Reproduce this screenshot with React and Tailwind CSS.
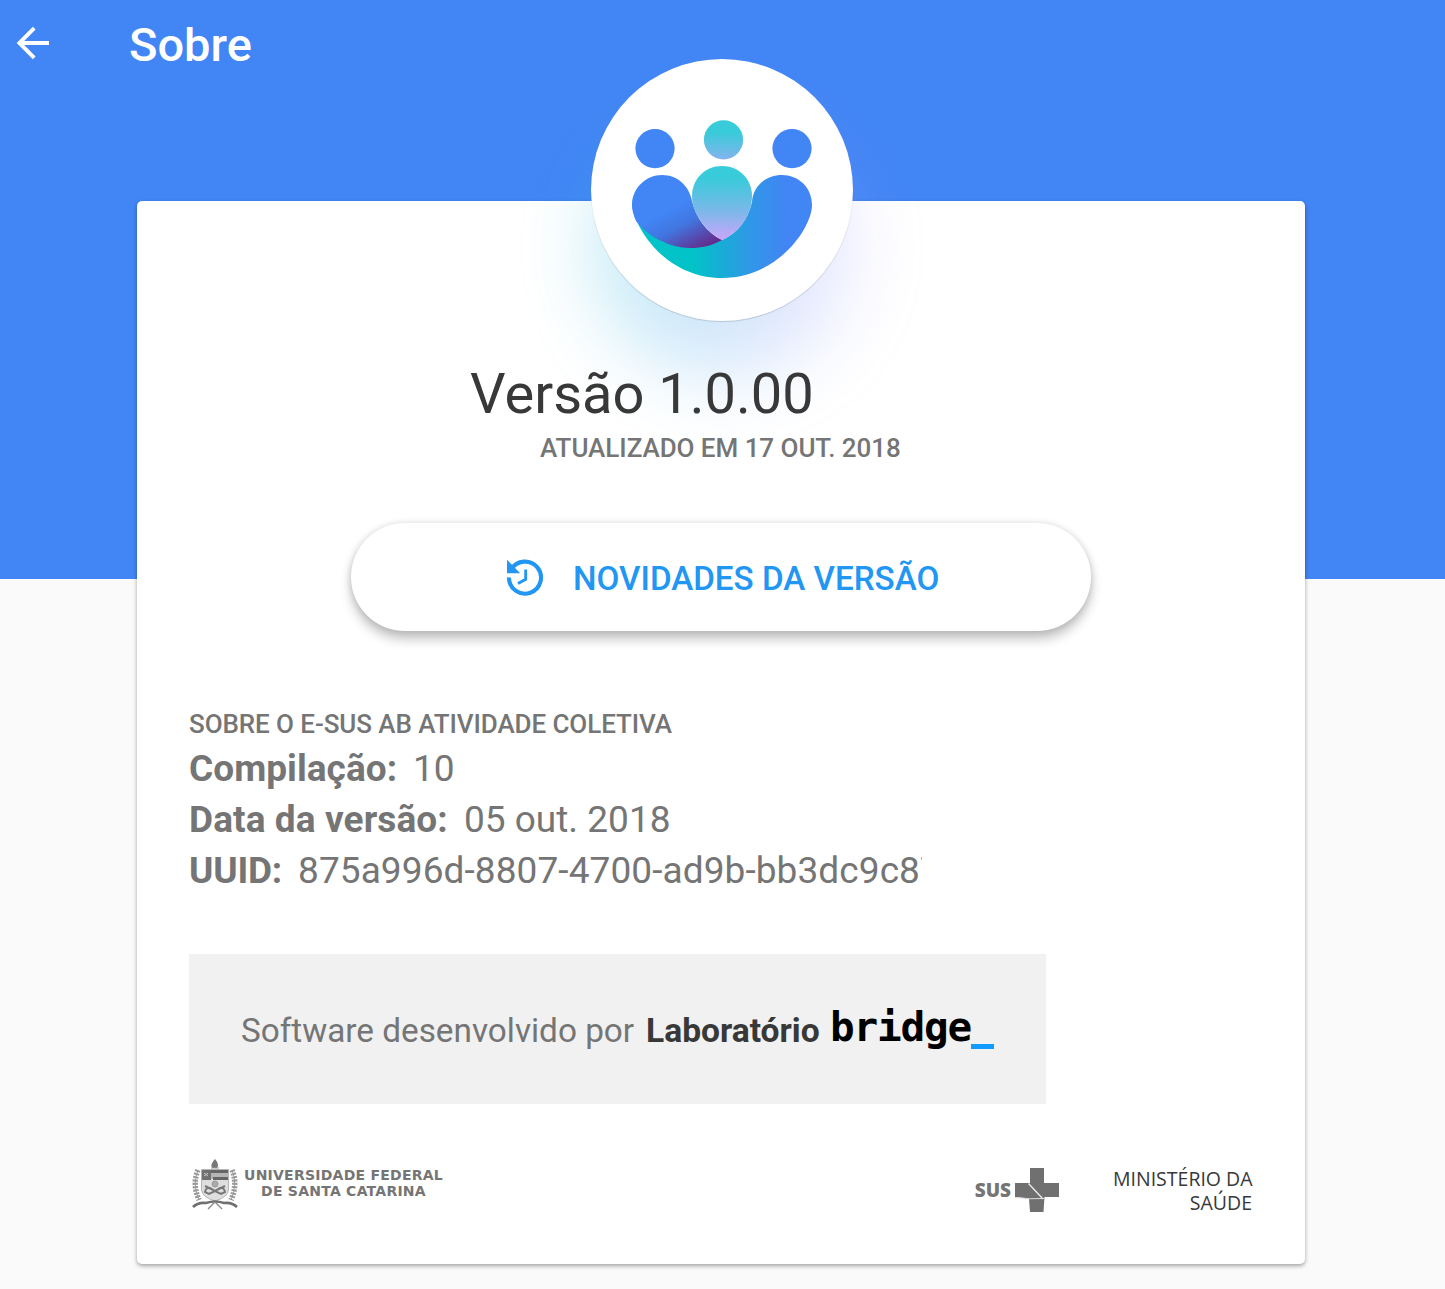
import React from "react";

function BackArrow() {
  return (
    <svg className="block h-[34px] w-[34px]" viewBox="0 0 34 34" fill="none" stroke="#fff" strokeWidth="3.9">
      <path d="M33 17H4M18.2 2.2L3.4 17L18.2 31.8" />
    </svg>
  );
}

function AppLogo() {
  return (
    <svg className="block h-[262px] w-[262px]" viewBox="0 0 262 262">
      <defs>
        <linearGradient id="smile" x1="40" y1="0" x2="222" y2="0" gradientUnits="userSpaceOnUse">
          <stop offset="0.34" stopColor="#01c3c8" />
          <stop offset="0.55" stopColor="#20a5da" />
          <stop offset="0.65" stopColor="#2f98e7" />
          <stop offset="0.85" stopColor="#4285f4" />
        </linearGradient>
        <linearGradient id="heart" x1="71" y1="132" x2="104" y2="196" gradientUnits="userSpaceOnUse">
          <stop offset="0.28" stopColor="#4285f4" />
          <stop offset="0.55" stopColor="#4176e0" />
          <stop offset="1" stopColor="#672686" />
        </linearGradient>
        <linearGradient id="drop" x1="0" y1="108" x2="0" y2="181" gradientUnits="userSpaceOnUse">
          <stop offset="0.15" stopColor="#38cbda" />
          <stop offset="0.6" stopColor="#7bb8e9" />
          <stop offset="1" stopColor="#cba5fa" />
        </linearGradient>
        <linearGradient id="head" x1="0" y1="61" x2="0" y2="101" gradientUnits="userSpaceOnUse">
          <stop offset="0.3" stopColor="#38cbda" />
          <stop offset="1" stopColor="#85b3ed" />
        </linearGradient>
      </defs>
      <circle cx="64" cy="89.6" r="19.6" fill="#4285f4" />
      <circle cx="132.5" cy="80.8" r="19.6" fill="url(#head)" />
      <circle cx="201" cy="89.6" r="19.6" fill="#4285f4" />
      <path d="M41 146C44 170 75 219 131 219C188 219 221 168 221 146C221 128 207 116 191 116C176 116 162 126 161 143C157 160 147 174 131 181Z" fill="url(#smile)" />
      <path d="M41 146C41 129 55 116 71 116C87 116 98 127 101 142C105 159 116 174 131 181C120 187 111 189 99 189C79 189 56 177 45 162Q41 153 41 146Z" fill="url(#heart)" />
      <path d="M101 137C101 120 114 107 131 107C148 107 161 120 161 137C161 155 149 173 131 181C114 172 101 154 101 137Z" fill="url(#drop)" />
    </svg>
  );
}

function HistoryIcon() {
  return (
    <svg className="block h-[38px] w-[38px]" viewBox="0 0 38 38" fill="none" stroke="#2196f3">
      <path d="M5.2 10.5A16 16 0 1 1 3 18.4" strokeWidth="4.1" />
      <path d="M1 0.8L14.2 14.2H1Z" fill="#2196f3" stroke="none" />
      <path d="M19.7 10.5V20.3L12 24.6" strokeWidth="2.9" />
    </svg>
  );
}

function UniversityCrest() {
  return (
    <svg className="block h-[54px] w-[48px]" viewBox="0 0 48 54">
      <path d="M24 1Q29 7 26 10H21Q19 6 24 1Z" fill="#777" />
      <path d="M20 10H28" stroke="#999" strokeWidth="1" />
      <path d="M10.5 11.5H37.5V32Q37 39 24 43Q11 39 10.5 32Z" fill="#dedede" stroke="#b5b5b5" />
      <path d="M11 12H37V21H11Z" fill="#b5b5b5" />
      <path d="M11 13.5H37M22 20.5H37" stroke="#666" strokeWidth="3" />
      <path d="M11 12H20V22H11Z" fill="#707070" />
      <path d="M13 15l4 3m0-3l-4 3" stroke="#ccc" />
      <path d="M14 34Q15 29 19 30L24 33L29 30Q33 29 34 34L30 36L24 33L18 36ZM14 28L24 33L34 28" fill="none" stroke="#777" strokeWidth="2" />
      <circle cx="24" cy="26" r="3" fill="#aaa" stroke="#999" />
      <path d="M7 12Q1 26 8 42M41 12Q47 26 40 42" fill="none" stroke="#999" strokeWidth="5.5" strokeDasharray="2 1.3" />
      <path d="M7 12Q1 26 8 42M41 12Q47 26 40 42" fill="none" stroke="#999" strokeWidth="1" />
      <path d="M2 49Q7 44 15 45Q24 42 33 45Q41 44 46 49" fill="none" stroke="#707070" strokeWidth="2.6" />
      <path d="M17 51L24 44L31 51" fill="none" stroke="#888" strokeWidth="1.3" />
    </svg>
  );
}

function SusCross() {
  return (
    <svg className="block h-[45px] w-[44px]" viewBox="0 0 44 45">
      <path d="M15 0H29V15H44V29H29.5L28.5 44H15L14 30.5L0 29V15H15Z" fill="#707070" />
      <path d="M13.5 15.5L28 31" stroke="#eee" strokeWidth="1.3" fill="none" />
      <path d="M0 29.5Q14 31.5 29 30.5" stroke="#ddd" strokeWidth="1" fill="none" />
    </svg>
  );
}

function InfoRow({ label, value, labelClass, valueClass }) {
  return (
    <div className="flex h-[51px] items-center overflow-hidden text-[37px] leading-[51px]">
      <span className={"shrink-0 font-bold " + labelClass}>{label}</span>
      <span className={"overflow-hidden " + valueClass}>{value}</span>
    </div>
  );
}

export default function App() {
  return (
    <div className="min-h-[1289px] w-[1445px] overflow-hidden whitespace-nowrap bg-[#fafafa] font-['Roboto',sans-serif] text-[#757575]">
      <header className="flex h-[579px] items-start bg-[#4285f4] text-white">
        <button className="ml-4 mt-[26px]" aria-label="Voltar"><BackArrow /></button>
        <h1 className="ml-[79px] mt-[17px] text-[47px] font-medium leading-[56px]">Sobre</h1>
      </header>
      <main className="-mt-[378px] ml-[137px] flex h-[1063px] w-[1168px] flex-col rounded-[5px] bg-white shadow-[0_2px_4px_rgba(0,0,0,0.35)]">
        <div className="relative -mt-[142px] ml-[454px] size-[262px]">
          <div className="absolute left-0 top-[56px] size-[262px] rounded-full bg-linear-to-r from-[#20c0dc] via-[#5aa5f0] to-[#b8aaff] opacity-28 blur-[37px]" />
          <div className="relative rounded-full bg-white shadow-[0_1px_1px_rgba(0,0,0,0.15)]"><AppLogo /></div>
        </div>
        <h2 className="relative ml-[333px] mt-[40px] h-[66px] text-[56px] leading-[66px] text-[#383838]">Versão 1.0.00</h2>
        <p className="relative ml-[403px] mt-[5px] h-[32px] text-[26px] font-medium leading-[32px] tracking-[-0.04px]">ATUALIZADO EM 17 OUT. 2018</p>
        <button className="ml-[214px] mt-[59px] flex h-[108px] w-[740px] items-center rounded-[60px] bg-white pl-[155px] text-[33.2px] font-medium text-[#2196f3] shadow-[0_8px_12px_rgba(0,0,0,0.24),0_0_7px_rgba(0,0,0,0.13)]">
          <div className="mt-[2px]"><HistoryIcon /></div>
          <span className="ml-[29px] mt-[3px]">NOVIDADES DA VERSÃO</span>
        </button>
        <section className="ml-[52px] mt-[77px] w-[733px]">
          <h3 className="h-[35px] text-[26px] font-medium leading-[32px] tracking-[-0.08px]">SOBRE O E-SUS AB ATIVIDADE COLETIVA</h3>
          <InfoRow label="Compilação:" value="10" labelClass="w-[224px] tracking-[0.04px]" valueClass="" />
          <InfoRow label="Data da versão:" value="05 out. 2018" labelClass="w-[275px] tracking-[0.1px]" valueClass="" />
          <InfoRow label="UUID:" value="875a996d-8807-4700-ad9b-bb3dc9c87" labelClass="w-[109px] tracking-[-0.2px]" valueClass="w-[624px] tracking-[0.09px]" />
        </section>
        <section className="ml-[52px] mt-[58px] flex h-[150px] w-[857px] items-center bg-[#f1f1f1] pl-[52px] text-[33.3px] leading-[40px]">
          <span className="mt-[3px] w-[405px] shrink-0">Software desenvolvido por</span>
          <span className="mt-[3px] w-[184px] shrink-0 text-[33.6px] font-bold text-[#383838]">Laboratório</span>
          <span className="-mt-[4px] font-['DejaVu_Sans_Mono',monospace] text-[41px] font-bold tracking-[-1.2px] text-black">bridge</span>
          <span className="mt-[35px] h-[5px] w-[23px] bg-[#109bff]" />
        </section>
        <footer className="ml-[54px] mr-[52px] mt-[54px] flex h-[54px] items-start text-[#757575]">
          <UniversityCrest />
          <div className="ml-[5px] mt-[9px] w-[199px] text-center font-['DejaVu_Sans',sans-serif] text-[14px] font-bold leading-[16px] tracking-[0.24px]">
            <p>UNIVERSIDADE FEDERAL</p>
            <p>DE SANTA CATARINA</p>
          </div>
          <span className="ml-auto mr-[4px] mt-[19px] font-['Open_Sans',sans-serif] text-[19px] font-extrabold leading-[27px]">SUS</span>
          <div className="mt-[10px]"><SusCross /></div>
          <div className="ml-[54px] mr-[1px] mt-[9px] w-[139px] text-right font-['Open_Sans',sans-serif] text-[19.5px] leading-[24px] text-[#383838]">
            <p>MINISTÉRIO DA</p>
            <p>SAÚDE</p>
          </div>
        </footer>
      </main>
    </div>
  );
}
